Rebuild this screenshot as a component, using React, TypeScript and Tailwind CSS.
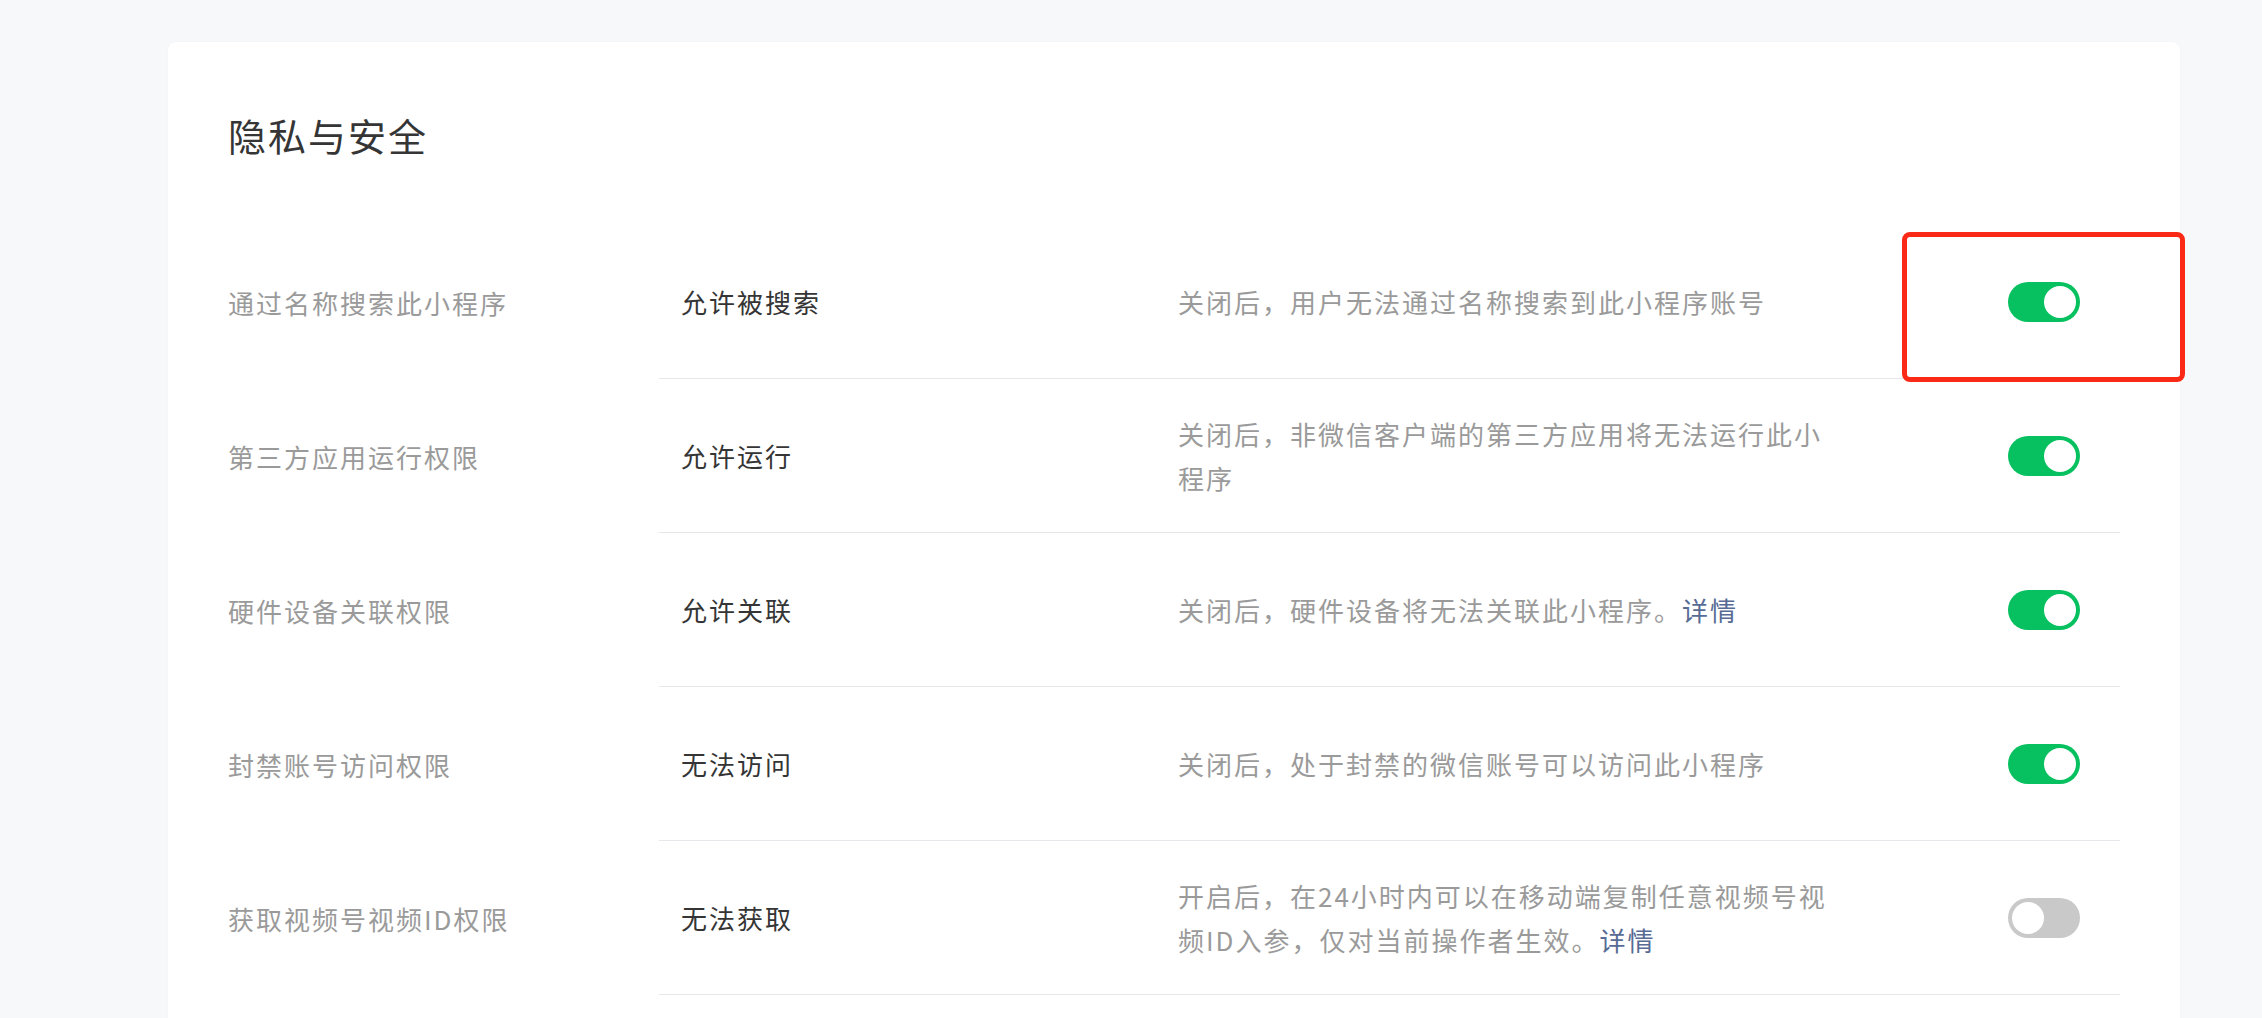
import React from "react";

type Row = {
  label: string;
  value: string;
  desc: React.ReactNode;
  on: boolean;
};

const Link = ({ children }: { children: React.ReactNode }) => (
  <span className="text-[#576b95]">{children}</span>
);

const rows: Row[] = [
  {
    label: "通过名称搜索此小程序",
    value: "允许被搜索",
    desc: "关闭后，用户无法通过名称搜索到此小程序账号",
    on: true,
  },
  {
    label: "第三方应用运行权限",
    value: "允许运行",
    desc: "关闭后，非微信客户端的第三方应用将无法运行此小程序",
    on: true,
  },
  {
    label: "硬件设备关联权限",
    value: "允许关联",
    desc: (
      <>
        关闭后，硬件设备将无法关联此小程序。<Link>详情</Link>
      </>
    ),
    on: true,
  },
  {
    label: "封禁账号访问权限",
    value: "无法访问",
    desc: "关闭后，处于封禁的微信账号可以访问此小程序",
    on: true,
  },
  {
    label: "获取视频号视频ID权限",
    value: "无法获取",
    desc: (
      <>
        开启后，在24小时内可以在移动端复制任意视频号视频ID入参，仅对当前操作者生效。<Link>详情</Link>
      </>
    ),
    on: false,
  },
];

const Toggle = ({ on }: { on: boolean }) => (
  <div
    className={
      on
        ? "w-[72px] h-[40px] rounded-full bg-[#07c160] flex items-center justify-end px-[4px] shrink-0"
        : "w-[72px] h-[40px] rounded-full bg-[#c9c9c9] flex items-center justify-start px-[4px] shrink-0"
    }
  >
    <div className="w-[32px] h-[32px] rounded-full bg-white" />
  </div>
);

export default function App() {
  return (
    <div
      className="relative h-[1018px] overflow-hidden bg-[#f7f8fa]"
      style={{ fontFamily: '"Noto Sans CJK SC", "Noto Sans", sans-serif' }}
    >
      <div className="ml-[168px] mt-[42px] w-[2012px] rounded-[8px] bg-white px-[60px] pt-[69px] pb-[200px] shadow-[0_0_2px_rgba(0,0,0,0.04)]">
        <div className="text-[38px] leading-[48px] tracking-[2px] text-[#353535]">
          隐私与安全
        </div>
        <div className="mt-[66px] flex flex-col">
          {rows.map((r, i) => (
            <div key={i} className="flex h-[154px]">
              <div className="w-[431px] shrink-0 flex items-center text-[26px] tracking-[2px] text-[#9a9a9a]">
                {r.label}
              </div>
              <div className="flex-1 flex items-center border-b border-[#e7e7eb] pl-[22px] pr-[40px]">
                <div className="w-[497px] shrink-0 text-[26px] tracking-[2px] text-[#353535]">
                  {r.value}
                </div>
                <div className="w-[660px] shrink-0 text-[26px] leading-[44px] tracking-[2px] text-[#9a9a9a]">
                  {r.desc}
                </div>
                <div className="ml-auto">
                  <Toggle on={r.on} />
                </div>
              </div>
            </div>
          ))}
        </div>
      </div>
      <div className="absolute left-[1902px] top-[232px] w-[283px] h-[150px] rounded-[8px] border-[5px] border-[#fa2a16]" />
    </div>
  );
}
